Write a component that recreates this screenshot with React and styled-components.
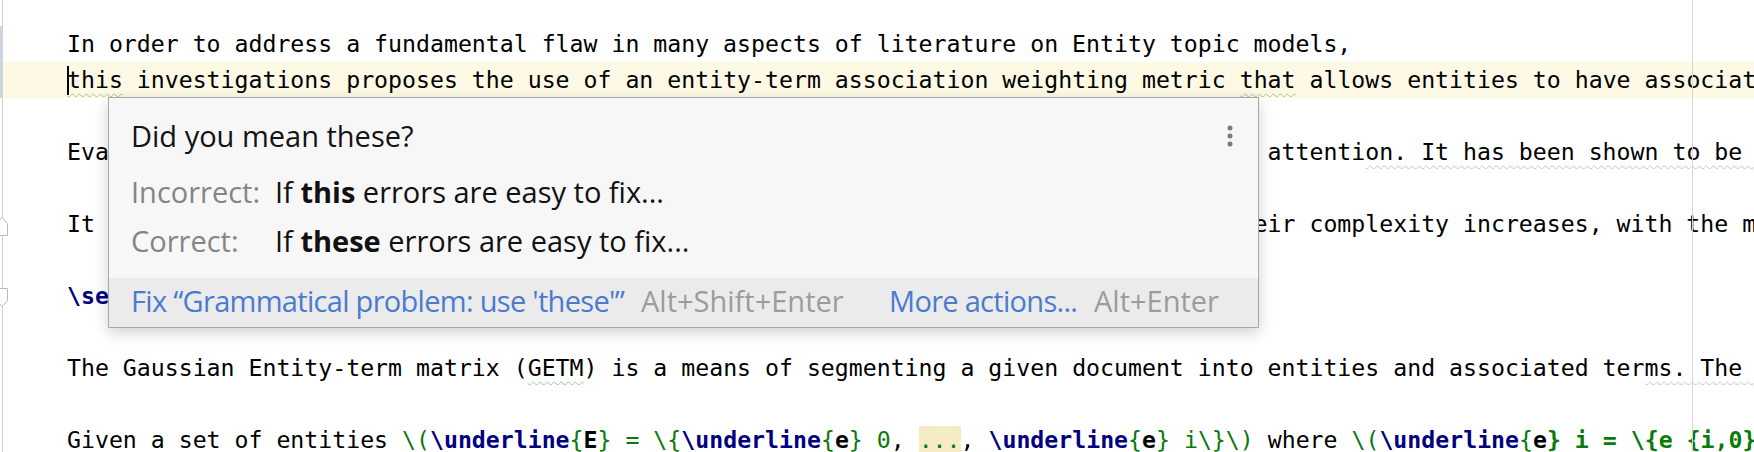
import React from 'react';
import styled, { createGlobalStyle } from 'styled-components';

const GlobalStyle = createGlobalStyle`
  html, body {
    margin: 0;
    padding: 0;
    background: #fff;
  }
`;

const Squiggle = ({ tone, children }) => <Wavy $tone={tone}>{children}</Wavy>;

const FoldMark = ({ kind }) => (
  <FoldIcon width="14" height="20" viewBox="0 0 14 20">
    {kind === 'end' ? (
      <path d="M1.5 19.5 V7.5 L7 1.5 L12.5 7.5 V19.5 Z" fill="#fff" stroke="#b8b8b8" />
    ) : (
      <path d="M1.5 0.5 H12.5 V12.5 L7 18.5 L1.5 12.5 Z" fill="#fff" stroke="#b8b8b8" />
    )}
  </FoldIcon>
);

const gutter = [
  { changed: true },
  { changed: true },
  {},
  {},
  {},
  { fold: 'end' },
  {},
  { fold: 'start' },
  {},
  {},
  {},
  {},
];

export default function App() {
  return (
    <Editor>
      <GlobalStyle />
      <Gutter>
        {gutter.map((g, i) => (
          <GutterCell key={i} $changed={g.changed}>
            {g.fold && <FoldMark kind={g.fold} />}
          </GutterCell>
        ))}
      </Gutter>
      <Code>
        <MarginGuide />
        <Line>In order to address a fundamental flaw in many aspects of literature on Entity topic models,</Line>
        <Line $current>
          <Caret />
          <Squiggle>this</Squiggle> investigations proposes the use of an entity-term association weighting metric{' '}
          <Squiggle>that</Squiggle> allows entities to have associated terms with differing weights.
        </Line>
        <Line />
        <Line>
          Evaluation of entity topic models is an important question which has attracted little attenti
          <Squiggle tone="grey">on. It has been shown to be difficult to measure the quality of such models.</Squiggle>
        </Line>
        <Line />
        <Line>It has also been observed that the performance of topic models tends to degrade as their complexity increases, with the most complex models performing worst.</Line>
        <Line />
        <Line>
          <Cmd>\section</Cmd>
          <Math>{'{'}</Math>Gaussian Entity-term Matrix<Math>{'}'}</Math>
        </Line>
        <Line />
        <Line>
          The Gaussian Entity-term matrix (<Squiggle>GETM</Squiggle>) is a means of segmenting a given document into entities and associated ter
          <Squiggle tone="grey">ms. The matrix is</Squiggle>
        </Line>
        <Line />
        <Line>
          Given a set of entities <Math>\(</Math>
          <Cmd>\underline</Cmd>
          <Math>{'{'}</Math>
          <Arg>E</Arg>
          <Math>{'}'} = \{'{'}</Math>
          <Cmd>\underline</Cmd>
          <Math>{'{'}</Math>
          <Arg>e</Arg>
          <Math>{'}'} 0</Math>, <Found><Math>...</Math></Found>, <Cmd>\underline</Cmd>
          <Math>{'{'}</Math>
          <Arg>e</Arg>
          <Math>{'} i\\}\\)'}</Math> where <Math>\(</Math>
          <Cmd>\underline</Cmd>
          <Math>{'{'}</Math>
          <Arg>e</Arg>
          <Math $strong>{'} i = \\{e {i,0}, ...\\}\\)'}</Math>
        </Line>
      </Code>

      <Popup>
        <Body>
          <Header>
            <Title>Did you mean these?</Title>
            <MoreIcon width="6" height="22" viewBox="0 0 6 22">
              <circle cx="3" cy="3" r="2.5" />
              <circle cx="3" cy="11" r="2.5" />
              <circle cx="3" cy="19" r="2.5" />
            </MoreIcon>
          </Header>
          <Row>
            <Label>Incorrect:</Label>
            <Sentence>If <b>this</b> errors are easy to fix...</Sentence>
          </Row>
          <Row $gap={9}>
            <Label>Correct:</Label>
            <Sentence>If <b>these</b> errors are easy to fix...</Sentence>
          </Row>
        </Body>
        <Footer>
          <Action>Fix “Grammatical problem: use 'these'”</Action>
          <Keys>Alt+Shift+Enter</Keys>
          <Action>More actions...</Action>
          <Keys>Alt+Enter</Keys>
        </Footer>
      </Popup>
    </Editor>
  );
}

const Editor = styled.div`
  position: relative;
  display: flex;
  width: 1754px;
  height: 452px;
  overflow: hidden;
  background: #fff;
`;

const Gutter = styled.div`
  flex: none;
  width: 2px;
  border-right: 1px solid #d3d3d3;
  padding-top: 26px;
  display: flex;
  flex-direction: column;
  position: relative;
  z-index: 2;
`;

const GutterCell = styled.div`
  flex: none;
  height: 36px;
  display: flex;
  align-items: center;
  background: ${(p) => (p.$changed ? '#cbd5e3' : 'transparent')};
`;

const FoldIcon = styled.svg`
  flex: none;
  margin-left: -5px;
  margin-top: 4px;
`;

const Code = styled.div`
  flex: 1;
  position: relative;
  padding-top: 26px;
  font-family: "DejaVu Sans Mono", monospace;
  font-size: 23.2px;
  line-height: 36px;
  color: #000;
  white-space: pre;
`;

const MarginGuide = styled.div`
  position: absolute;
  top: 0;
  bottom: 0;
  left: 1689px;
  width: 1px;
  background: #d6d6d6;
  z-index: 1;
`;

const Line = styled.div`
  height: 36px;
  padding-left: 64px;
  background: ${(p) => (p.$current ? '#fdf9e5' : 'transparent')};
`;

const Caret = styled.span`
  display: inline-block;
  width: 2px;
  height: 29px;
  margin-right: -2px;
  vertical-align: -7px;
  background: #000;
`;

const Wavy = styled.span`
  text-decoration: underline wavy ${(p) => (p.$tone === 'grey' ? '#c6c6c6' : '#93cf93')};
  text-decoration-thickness: 1px;
  text-underline-offset: 5px;
`;

const Cmd = styled.span`
  color: #000080;
  font-weight: bold;
`;

const Math = styled.span`
  color: #0a7a0a;
  font-weight: ${(p) => (p.$strong ? 'bold' : 'normal')};
`;

const Arg = styled.span`
  color: #000;
  font-weight: bold;
`;

const Found = styled.span`
  background: #f5ebc5;
`;

const Popup = styled.div`
  position: absolute;
  left: 108px;
  top: 97px;
  width: 1151px;
  box-sizing: border-box;
  background: #f7f7f7;
  border: 1px solid #a9a9a9;
  box-shadow: 0 5px 14px rgba(0, 0, 0, 0.18);
  font-family: "Open Sans", sans-serif;
  font-size: 29px;
  line-height: 40px;
  white-space: nowrap;
  z-index: 5;
`;

const Body = styled.div`
  padding: 18px 22px 17px;
`;

const Header = styled.div`
  display: flex;
  align-items: center;
  justify-content: space-between;
  margin-bottom: 16px;
`;

const Title = styled.div`
  color: #141414;
`;

const MoreIcon = styled.svg`
  fill: #7a7a7a;
  margin-right: 3px;
`;

const Row = styled.div`
  display: grid;
  grid-template-columns: 144px auto;
  margin-top: ${(p) => p.$gap || 0}px;
`;

const Label = styled.span`
  color: #858585;
`;

const Sentence = styled.span`
  color: #111;

  b {
    font-weight: 700;
  }
`;

const Footer = styled.div`
  display: grid;
  grid-template-columns: 510px 248px 205px auto;
  background: #ebebeb;
  padding: 3px 22px 6px;
`;

const Action = styled.span`
  color: #4a7bcf;
  letter-spacing: -0.7px;
`;

const Keys = styled.span`
  color: #9c9c9c;
`;
